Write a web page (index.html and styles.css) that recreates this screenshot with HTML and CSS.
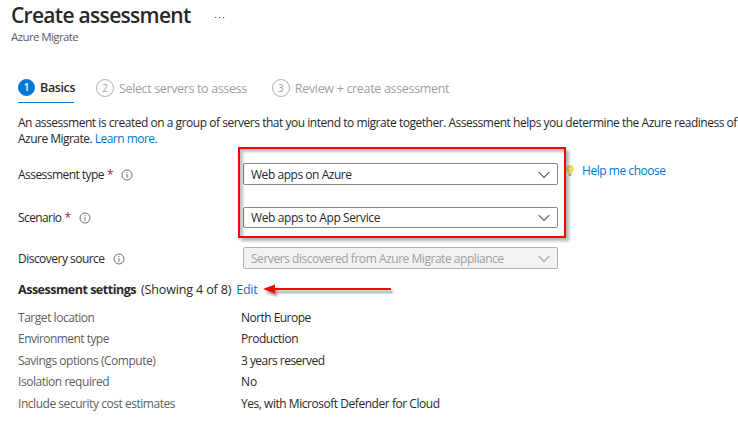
FILE: index.html
```
<!DOCTYPE html>
<html lang="en">
<head>
<meta charset="utf-8">
<title>Create assessment</title>
<link rel="stylesheet" href="styles.css">
</head>
<body>
<header class="header">
  <div class="title-row"><h1 class="title">Create assessment</h1>
    <svg class="more" width="12" height="4" viewBox="0 0 12 4"><path d="M1 2.500h1.200M5 2.500h1.200M9 2.500h1.200" stroke="#555" stroke-width="1.200"/></svg>
  </div>
  <div class="subtitle"><span class="t-sub">Azure Migrate</span></div>
</header>
<main class="content">
  <nav class="tabs">
    <a class="tab active"><span class="num">1</span><span class="t-basics">Basics</span></a>
    <a class="tab"><span class="num">2</span><span class="t-select">Select servers to assess</span></a>
    <a class="tab"><span class="num">3</span><span class="t-review">Review + create assessment</span></a>
  </nav>
  <p class="intro"><span class="t-intro">An assessment is created on a group of servers that you intend to migrate together. Assessment helps you determine the Azure readiness of</span><br><span class="t-learn">Azure Migrate. <a class="link">Learn more.</a></span></p>
  <div class="form">
    <div class="row first">
      <label class="label"><span class="t-type">Assessment type</span><span class="req">*</span>
        <svg class="info" width="12" height="12" viewBox="0 0 12 12"><circle cx="6" cy="6" r="5"/><path d="M6 5.200v3.600M6 3.100v1.100"/></svg></label>
      <div class="select"><span class="t-opt1">Web apps on Azure</span><svg class="chev" width="12" height="8" viewBox="0 0 12 8"><path d="M.7 1.200 6 6.500l5.300-5.300"/></svg></div>
      <a class="help link"><svg width="10" height="14" viewBox="0 0 10 14"><path d="M5 1a3.800 3.800 0 0 0-2 7l.5 2h3L7 8a3.800 3.800 0 0 0-2-7z" fill="#fcd64f"/><path d="M3.500 4.500h3M5 5v4" stroke="#fff2b0"/><path d="M3.700 10h2.600v2H3.700z" fill="#aaa"/></svg><span class="t-help">Help me choose</span></a>
    </div>
    <div class="row second">
      <label class="label"><span class="t-scenario">Scenario</span><span class="req">*</span>
        <svg class="info" width="12" height="12" viewBox="0 0 12 12"><circle cx="6" cy="6" r="5"/><path d="M6 5.200v3.600M6 3.100v1.100"/></svg></label>
      <div class="select"><span class="t-opt2">Web apps to App Service</span><svg class="chev" width="12" height="8" viewBox="0 0 12 8"><path d="M.7 1.200 6 6.500l5.300-5.300"/></svg></div>
    </div>
    <div class="row third">
      <label class="label"><span class="t-source">Discovery source</span>
        <svg class="info" width="12" height="12" viewBox="0 0 12 12"><circle cx="6" cy="6" r="5"/><path d="M6 5.200v3.600M6 3.100v1.100"/></svg></label>
      <div class="select disabled"><span class="t-opt3">Servers discovered from Azure Migrate appliance</span><svg class="chev" width="12" height="8" viewBox="0 0 12 8"><path d="M.7 1.200 6 6.500l5.300-5.300"/></svg></div>
    </div>
    <div class="highlight"></div>
  </div>
  <div class="settings-head"><strong class="t-settings">Assessment settings</strong><span class="t-showing">(Showing 4 of 8)</span><a class="link t-edit">Edit</a>
    <svg class="arrow" width="134" height="16" viewBox="0 0 134 16"><path d="M2 7 14 2.500v3.600h116v1.800H14v3.600z"/></svg>
  </div>
  <dl class="settings">
    <dt><span class="t-d1">Target location</span></dt><dd><span class="t-v1">North Europe</span></dd>
    <dt><span class="t-d2">Environment type</span></dt><dd><span class="t-v2">Production</span></dd>
    <dt><span class="t-d3">Savings options (Compute)</span></dt><dd><span class="t-v3">3 years reserved</span></dd>
    <dt><span class="t-d4">Isolation required</span></dt><dd><span class="t-v4">No</span></dd>
    <dt><span class="t-d5">Include security cost estimates</span></dt><dd><span class="t-v5">Yes, with Microsoft Defender for Cloud</span></dd>
  </dl>
</main>
</body>
</html>
```
FILE: styles.css
```
* { box-sizing: border-box; }
body { margin: 0; width: 738px; height: 425px; overflow: hidden; background: #fff; color: #292827; font: 12px/16px "Open Sans", "Noto Sans", sans-serif; letter-spacing: -0.460px; }
span, strong, a { white-space: nowrap; }
.header { height: 72px; padding-left: 11px; }
.title-row { display: flex; align-items: center; height: 30px; }
.title { margin: 0; width: 203px; font-size: 21px; line-height: 30px; font-weight: 600; letter-spacing: -0.700px; white-space: nowrap; }
.more { margin-top: 3px; }
.subtitle { height: 16px; line-height: 14px; font-size: 11.500px; letter-spacing: -0.600px; color: #605e5c; }
.content { padding-left: 18px; }
.tabs { display: flex; height: 31px; font-size: 12.500px; letter-spacing: -0.360px; }
.tab { display: flex; align-items: center; height: 31px; color: #a19f9d; margin-right: 25px; }
.tab span:last-child { padding-top: 2px; }
.tab.active { color: #292827; border-bottom: 1px solid #0078d4; font-weight: 600; width: 56px; margin-right: 22px; }
.num { width: 18px; height: 18px; margin-right: 5px; border: 1px solid #b3b0ad; border-radius: 50%; text-align: center; font-size: 10px; line-height: 16px; letter-spacing: 0; flex: none; }
.active .num { background: #0078d4; border-color: #0078d4; color: #fff; width: 17px; height: 17px; line-height: 15px; }
.intro { margin: 12px 0 0; height: 32px; }
.link { color: #0078d4; }
.form { position: relative; padding-top: 16px; }
.row { display: flex; align-items: center; height: 22px; }
.second { margin-top: 22px; }
.third { margin-top: 18px; }
.label { display: flex; align-items: center; width: 225px; padding-top: 2px; }
.second .label { padding-top: 0; }
.req { color: #a4262c; margin-left: 3px; }
.info { margin-left: 8px; fill: none; stroke: #605e5c; stroke-width: .9; }
.select { display: flex; align-items: center; justify-content: space-between; width: 315px; height: 22px; padding: 2px 7px 0; border: 1px solid #8a8886; border-radius: 2px; }
.second .select { height: 21px; margin-top: -1px; padding-top: 1px; }
.chev { fill: none; stroke: #605e5c; stroke-width: 1.200; }
.disabled { background: #f3f2f1; color: #a19f9d; border-color: #b3b0ad; }
.disabled .chev { stroke: #a19f9d; }
.help { display: flex; align-items: center; height: 16px; margin: -6px 0 0 7px; gap: 7px; }
.highlight { position: absolute; left: 220px; top: 0; width: 328px; height: 91px; border: 2px solid #fe0000; box-shadow: 3px 3px 3px rgba(0,0,0,.3), inset 3px 3px 3px rgba(0,0,0,.25); }
.settings-head { display: flex; align-items: center; height: 20px; margin-top: 11px; font-size: 12.500px; letter-spacing: -0.300px; }
.settings-head strong { margin-right: 5px; font-weight: 700; letter-spacing: -0.480px; }
.settings-head .link { margin-left: 5px; }
.arrow { margin-left: 4px; fill: #fe0000; filter: drop-shadow(2px 3px 1px rgba(0,0,0,.4)); overflow: visible; }
.settings { display: grid; grid-template-columns: 223px 1fr; grid-auto-rows: 21.500px; align-items: center; margin: 7px 0 0; }
.settings dt { color: #605e5c; }
.settings dd { margin: 0; }
.t-intro { letter-spacing: -0.475px; }
.t-review { letter-spacing: -0.320px; }
.t-learn, .t-source { letter-spacing: -0.520px; }
.t-scenario { letter-spacing: -0.600px; }
.t-type, .t-d2, .t-v1, .t-v3 { letter-spacing: -0.540px; }
.t-opt2 { letter-spacing: -0.400px; }
.t-opt3, .t-help { letter-spacing: -0.460px; }
.t-showing { letter-spacing: -0.140px; }
.t-v4 { letter-spacing: 0; }
```
